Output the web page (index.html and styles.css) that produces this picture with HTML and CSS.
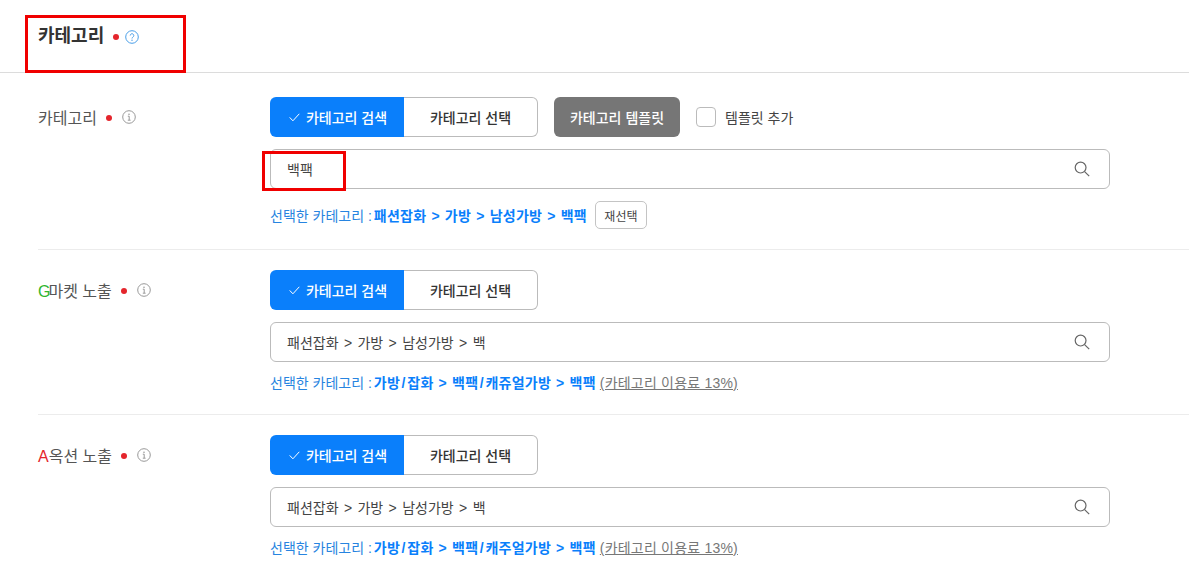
FILE: index.html
```html
<!DOCTYPE html>
<html lang="ko">
<head>
<meta charset="UTF-8">
<title>카테고리</title>
<link rel="stylesheet" href="styles.css">
</head>
<body>
<div class="page">

  <div class="page-head">
    <h2>카테고리</h2>
    <span class="dot"></span>
    <svg class="help-icon" width="14" height="14" viewBox="0 0 14 14"><circle cx="7" cy="7" r="6.3" fill="none" stroke="#4a9fe8" stroke-width="1"/><path d="M5.2 5.5a1.8 1.8 0 1 1 2.7 1.6c-.6.4-.9.7-.9 1.4" fill="none" stroke="#4a9fe8" stroke-width="1"/><circle cx="7" cy="10.3" r=".7" fill="#4a9fe8"/></svg>
  </div>

  <div class="row row-first">
    <div class="row-label">
      <span>카테고리</span>
      <span class="dot"></span>
      <svg class="info-icon" width="14" height="14" viewBox="0 0 14 14"><circle cx="7" cy="7" r="6.3" fill="none" stroke="#999" stroke-width="1"/><circle cx="7" cy="4.2" r=".8" fill="#999"/><path d="M5.8 6.2H7.2V10M5.8 10.2h2.8" fill="none" stroke="#999" stroke-width="1"/></svg>
    </div>
    <div class="row-body">
      <div class="btn-line">
        <div class="tabs">
          <div class="tab tab-on"><svg class="check" width="11" height="9" viewBox="0 0 11 9"><path d="M.7 4.4 3.9 7.8 10.3 .8" fill="none" stroke="#fff" stroke-width="1"/></svg>카테고리 검색</div>
          <div class="tab">카테고리 선택</div>
        </div>
        <div class="btn-template">카테고리 템플릿</div>
        <label class="check-label"><span class="checkbox"></span>템플릿 추가</label>
      </div>
      <div class="search">
        <span class="search-text">백팩</span>
        <svg class="search-icon" width="16" height="16" viewBox="0 0 16 16"><circle cx="6.6" cy="6.6" r="5.4" fill="none" stroke="#666" stroke-width="1.2"/><path d="M10.6 10.6l4.6 4.6" stroke="#666" stroke-width="1.2"/></svg>
      </div>
      <div class="picked">선택한 카테고리 :<b>패션잡화 &gt; 가방 &gt; 남성가방 &gt; 백팩</b><span class="btn-reselect">재선택</span></div>
    </div>
  </div>

  <div class="row">
    <div class="row-label">
      <span><span class="g">G</span>마켓 노출</span>
      <span class="dot"></span>
      <svg class="info-icon" width="14" height="14" viewBox="0 0 14 14"><circle cx="7" cy="7" r="6.3" fill="none" stroke="#999" stroke-width="1"/><circle cx="7" cy="4.2" r=".8" fill="#999"/><path d="M5.8 6.2H7.2V10M5.8 10.2h2.8" fill="none" stroke="#999" stroke-width="1"/></svg>
    </div>
    <div class="row-body">
      <div class="btn-line">
        <div class="tabs">
          <div class="tab tab-on"><svg class="check" width="11" height="9" viewBox="0 0 11 9"><path d="M.7 4.4 3.9 7.8 10.3 .8" fill="none" stroke="#fff" stroke-width="1"/></svg>카테고리 검색</div>
          <div class="tab">카테고리 선택</div>
        </div>
      </div>
      <div class="search">
        <span class="search-text">패션잡화 &gt; 가방 &gt; 남성가방 &gt; 백</span>
        <svg class="search-icon" width="16" height="16" viewBox="0 0 16 16"><circle cx="6.6" cy="6.6" r="5.4" fill="none" stroke="#666" stroke-width="1.2"/><path d="M10.6 10.6l4.6 4.6" stroke="#666" stroke-width="1.2"/></svg>
      </div>
      <div class="picked">선택한 카테고리 :<b>가방<i class="sl">/</i>잡화 &gt; 백팩<i class="sl">/</i>캐쥬얼가방 &gt; 백팩</b><span class="fee">(카테고리 이용료 13%)</span></div>
    </div>
  </div>

  <div class="row">
    <div class="row-label">
      <span><span class="a">A</span>옥션 노출</span>
      <span class="dot"></span>
      <svg class="info-icon" width="14" height="14" viewBox="0 0 14 14"><circle cx="7" cy="7" r="6.3" fill="none" stroke="#999" stroke-width="1"/><circle cx="7" cy="4.2" r=".8" fill="#999"/><path d="M5.8 6.2H7.2V10M5.8 10.2h2.8" fill="none" stroke="#999" stroke-width="1"/></svg>
    </div>
    <div class="row-body">
      <div class="btn-line">
        <div class="tabs">
          <div class="tab tab-on"><svg class="check" width="11" height="9" viewBox="0 0 11 9"><path d="M.7 4.4 3.9 7.8 10.3 .8" fill="none" stroke="#fff" stroke-width="1"/></svg>카테고리 검색</div>
          <div class="tab">카테고리 선택</div>
        </div>
      </div>
      <div class="search">
        <span class="search-text">패션잡화 &gt; 가방 &gt; 남성가방 &gt; 백</span>
        <svg class="search-icon" width="16" height="16" viewBox="0 0 16 16"><circle cx="6.6" cy="6.6" r="5.4" fill="none" stroke="#666" stroke-width="1.2"/><path d="M10.6 10.6l4.6 4.6" stroke="#666" stroke-width="1.2"/></svg>
      </div>
      <div class="picked">선택한 카테고리 :<b>가방<i class="sl">/</i>잡화 &gt; 백팩<i class="sl">/</i>캐주얼가방 &gt; 백팩</b><span class="fee">(카테고리 이용료 13%)</span></div>
    </div>
  </div>

  <div class="mark mark-title"></div>
  <div class="mark mark-search"></div>
</div>
</body>
</html>
```

FILE: styles.css
```css
html, body {
  margin: 0;
  height: 100%;
  overflow: hidden;
  background: #fff;
}

body {
  font-family: "Liberation Sans", "Noto Sans CJK KR", sans-serif;
  font-size: 14px;
  color: #333;
}

.page {
  position: relative;
}

.page-head {
  display: flex;
  align-items: flex-start;
  height: 72px;
  padding-left: 38px;
  border-bottom: 1px solid #dcdcdc;
}

.page-head h2 {
  margin: 23px 0 0;
  font-size: 18px;
  font-weight: 700;
  line-height: 26px;
  color: #333;
}

.page-head .dot {
  margin: 34px 6px 0 9px;
}

.page-head .help-icon {
  margin-top: 30px;
}

.dot {
  display: inline-block;
  width: 6px;
  height: 6px;
  border-radius: 50%;
  background: #e4252c;
}

.row {
  display: flex;
  margin-left: 38px;
  padding: 20px 0 0;
  height: 144px;
  border-bottom: 1px solid #ececec;
}

.row-first {
  padding-top: 24px;
  height: 152px;
}

.row-label {
  display: flex;
  align-items: center;
  width: 232px;
  height: 40px;
  font-size: 16px;
  color: #555;
}

.row-label .dot {
  margin: 2px 10px 0 9px;
}

.g {
  color: #2fb52f;
  letter-spacing: -2px;
}

.a {
  color: #e4252c;
}

.row-body {
  width: 840px;
}

.btn-line {
  display: flex;
  align-items: center;
  height: 40px;
}

.tabs {
  display: flex;
  width: 268px;
  height: 40px;
}

.tab {
  display: flex;
  align-items: center;
  justify-content: center;
  flex: 0 0 134px;
  box-sizing: border-box;
  background: #fff;
  border: 1px solid #bbb;
  border-left: none;
  border-radius: 0 6px 6px 0;
  font-weight: 500;
  color: #333;
}

.tab-on {
  padding-left: 2px;
  background: #0a7ffb;
  border: none;
  border-radius: 6px 0 0 6px;
  color: #fff;
}

.check {
  margin-right: 6px;
}

.btn-template {
  display: flex;
  align-items: center;
  justify-content: center;
  width: 126px;
  height: 40px;
  margin-left: 16px;
  border-radius: 6px;
  background: #767676;
  color: #fff;
  font-weight: 500;
}

.check-label {
  display: flex;
  align-items: center;
  margin-left: 16px;
  color: #444;
}

.checkbox {
  width: 18px;
  height: 18px;
  margin-right: 9px;
  border: 1px solid #bbb;
  border-radius: 4px;
}

.search {
  display: flex;
  align-items: center;
  justify-content: space-between;
  box-sizing: border-box;
  height: 40px;
  margin-top: 12px;
  padding: 0 19px 0 16px;
  border: 1px solid #bbb;
  border-radius: 6px;
}

.search-text {
  color: #444;
  word-spacing: 1.5px;
}

.picked {
  display: flex;
  align-items: center;
  height: 16px;
  margin-top: 12px;
  color: #2784e0;
  white-space: pre;
}

.picked b {
  margin-left: 2px;
  color: #0a7ffb;
  word-spacing: .9px;
  letter-spacing: .25px;
}

.row-first .picked {
  height: 28px;
}

.sl {
  padding: 0 1.5px;
  font-style: normal;
}

.fee {
  margin-left: 4px;
  color: #777;
  text-decoration: underline;
  letter-spacing: .2px;
}

.btn-reselect {
  display: flex;
  align-items: center;
  justify-content: center;
  box-sizing: border-box;
  width: 52px;
  height: 28px;
  margin-left: 8px;
  border: 1px solid #c4c4c4;
  border-radius: 5px;
  font-size: 12px;
  color: #444;
}

.mark {
  position: absolute;
  box-sizing: border-box;
  border: 3px solid #f00000;
}

.mark-title {
  left: 25px;
  top: 15px;
  width: 161px;
  height: 58px;
}

.mark-search {
  left: 262px;
  top: 151px;
  width: 84px;
  height: 40px;
}
```
